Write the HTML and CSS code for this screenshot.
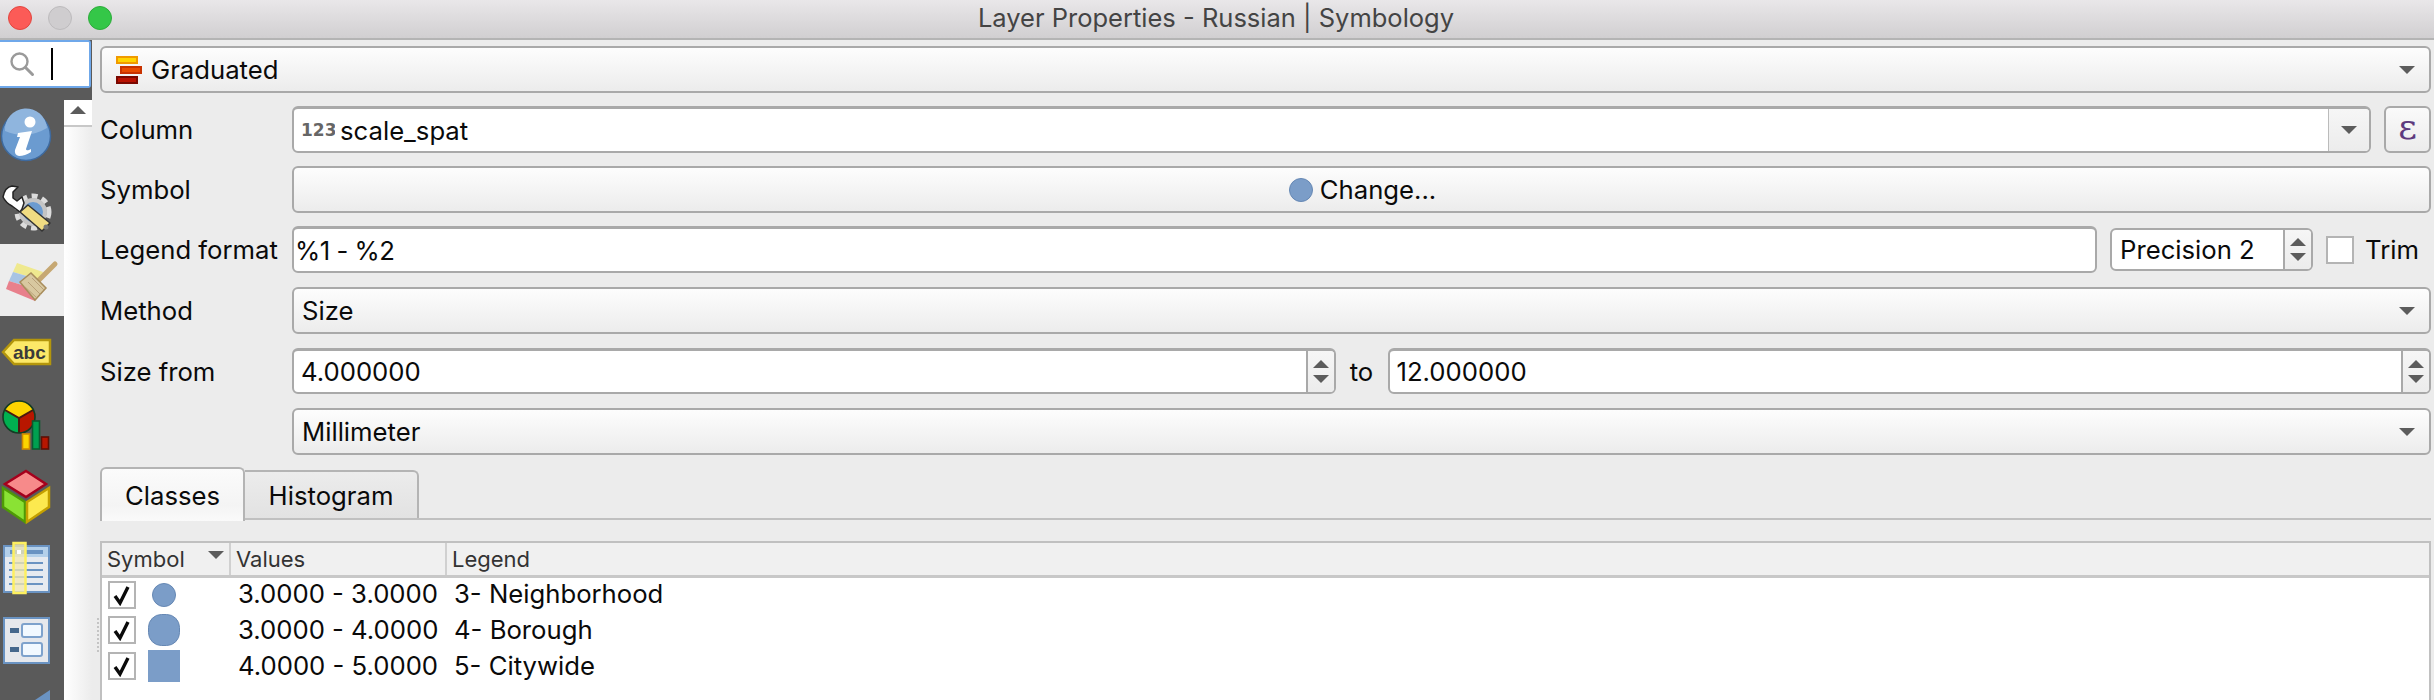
FILE: index.html
```html
<!DOCTYPE html>
<html lang="en">
<head>
  <meta charset="UTF-8" />
  <title>Layer Properties - Russian | Symbology</title>
  <link rel="stylesheet" href="styles.css">
</head>
<body>
  <div class="titlebar">
    <div class="lights">
      <span class="light red"></span>
      <span class="light grey"></span>
      <span class="light green"></span>
    </div>
    <div class="title">Layer Properties - Russian | Symbology</div>
  </div>

  <div class="window">
    <div class="sidebar">
      <div class="search">
        <svg class="search-icon" width="26" height="26" viewBox="0 0 26 26"><circle cx="10.5" cy="10.5" r="8" fill="none" stroke="#9a9a9a" stroke-width="2.4"/><path d="M16.5 16.5l7 7" stroke="#9a9a9a" stroke-width="3" stroke-linecap="round"/></svg>
        <span class="caret"></span>
      </div>
      <div class="sidebar-body">
        <div class="tabs-strip">
          <div class="page-item">
            <svg width="64" height="72" viewBox="0 0 64 72"><circle cx="26" cy="36" r="24.5" fill="#6b9bd0" stroke="#3e6a9f" stroke-width="1.5"/><path d="M5 31a21 21 0 0 1 42-3q-20 12-42 3z" fill="#8fb5de"/><circle cx="30" cy="22" r="5.5" fill="#fff"/><path d="M18 33l14-2-6 18q0 2 3 1l2-1 0 3q-6 4-12 4-5-1-4-6l5-13-3 0z" fill="#fff"/></svg>
          </div>
          <div class="page-item">
            <svg width="64" height="72" viewBox="0 0 64 72"><circle cx="33" cy="40" r="16" fill="none" stroke="#dcdcdc" stroke-width="5" stroke-dasharray="6 4.500"/><circle cx="33" cy="40" r="12" fill="#6b9bd0" stroke="#c4c4c4" stroke-width="4"/><path d="M3 25Q5 15 12 14L18 15 13 20 13 26 17 29 22 25 24 31 22 37 20 40 12 34Q6 31 3 25z" fill="#fff" stroke="#222" stroke-width="1.500" stroke-linejoin="round"/><polygon points="20,40 28,33 50,51 42,59" fill="#f0dc82" stroke="#333" stroke-width="1.500" stroke-linejoin="round"/><circle cx="46" cy="55" r="2.500" fill="#777"/></svg>
          </div>
          <div class="page-item active">
            <svg width="64" height="72" viewBox="0 0 64 72"><polygon points="17,19 43,28 40,36 13,28" fill="#efe98f"/><polygon points="13,28 40,36 38,46 9,37" fill="#a8c4e4"/><polygon points="9,37 38,46 35,57 6,45" fill="#e8808c"/><path d="M55 20L38 37" stroke="#c6a873" stroke-width="5" stroke-linecap="round"/><polygon points="20,38 31,29 46,44 35,56" fill="#d8c8a0" stroke="#a88d5c" stroke-width="1.5"/><path d="M24 42l13 12M28 38l13 13M32 34l12 12" stroke="#b8a078" stroke-width="1"/></svg>
          </div>
          <div class="page-item">
            <svg width="64" height="72" viewBox="0 0 64 72"><polygon points="3,36 14,24 50,24 50,48 14,48" fill="#fce868" stroke="#b4960c" stroke-width="2.5"/><text class="abc-text" x="13" y="43">abc</text></svg>
          </div>
          <div class="page-item">
            <svg width="64" height="72" viewBox="0 0 64 72"><path d="M19 30L5 22a15.5 15.5 0 0 1 28 0z" fill="#fcd500"/><path d="M19 30L33 22a15.5 15.5 0 0 1-14 23z" fill="#b81600"/><path d="M19 30L5 22a15.5 15.5 0 0 0 14 23z" fill="#00b050"/><path d="M5 22l14 8 14-8M19 30v15" fill="none" stroke="#4a1a10" stroke-width="2"/><circle cx="19" cy="29" r="16" fill="none" stroke="#143c24" stroke-width="1.6"/><rect x="22.500" y="46" width="7" height="15" fill="#fcd500" stroke="#d08a00" stroke-width="1.6"/><rect x="32.500" y="33" width="7" height="28" fill="#00a050" stroke="#0a5a30" stroke-width="1.6"/><rect x="41.500" y="49" width="7" height="12" fill="#b81600" stroke="#5c1006" stroke-width="1.6"/></svg>
          </div>
          <div class="page-item">
            <svg width="64" height="72" viewBox="0 0 64 72"><polygon points="26,11 46,24 26,37 5,24" fill="#f78a8a" stroke="#a5001c" stroke-width="2.5"/><polygon points="3,28 25,42 25,62 3,47" fill="#8ae234" stroke="#4e9a06" stroke-width="2.5"/><polygon points="27,42 49,28 49,47 27,62" fill="#fce94f" stroke="#c4a000" stroke-width="2.5"/></svg>
          </div>
          <div class="page-item">
            <svg width="64" height="72" viewBox="0 0 64 72"><rect x="4" y="14" width="45" height="46" fill="#e6eaf0" stroke="#6a93c2" stroke-width="2"/><rect x="5" y="15" width="43" height="10" fill="#b4d0ea"/><rect x="10" y="18" width="33" height="4" fill="#6a93c2"/><path d="M9 31h34M9 38h34M9 45h34M9 52h34" stroke="#6a93c2" stroke-width="2"/><rect x="13.500" y="11" width="12" height="50" fill="#f4e8b0" fill-opacity="0.75" stroke="#fdf060" stroke-width="2.500"/><rect x="17" y="18" width="4" height="4" fill="#fff"/></svg>
          </div>
          <div class="page-item">
            <svg width="64" height="72" viewBox="0 0 64 72"><rect x="4" y="14" width="45" height="45" fill="#e6e8ec" stroke="#6a93c2" stroke-width="2"/><rect x="10" y="24" width="9" height="5" fill="#46688c"/><rect x="10" y="43" width="9" height="5" fill="#46688c"/><rect x="22" y="20" width="20" height="13" rx="2" fill="#f2f9ff" stroke="#7ea2cc" stroke-width="2"/><rect x="22" y="39" width="20" height="13" rx="2" fill="#f2f9ff" stroke="#7ea2cc" stroke-width="2"/></svg>
          </div>
          <div class="page-item last">
            <svg width="64" height="24" viewBox="0 0 64 24"><polygon points="50,14 35,24 50,24" fill="#6a93c2"/></svg>
          </div>
        </div>
        <div class="scrollbar">
          <div class="scroll-up"><span class="arrow-up"></span></div>
          <div class="scroll-track"></div>
        </div>
      </div>
    </div>

    <div class="main">
      <div class="combo row-full">
        <svg class="renderer-icon" width="26" height="28" viewBox="0 0 26 28"><rect x="1" y="1" width="20" height="6" fill="#ffd400" stroke="#f09a00" stroke-width="2"/><rect x="5" y="11" width="20" height="6" fill="#e84a00" stroke="#c83200" stroke-width="2"/><rect x="1" y="21" width="20" height="6" fill="#b81000" stroke="#7a0800" stroke-width="2"/></svg>
        <span class="combo-text">Graduated</span>
        <span class="arrow-down combo-arrow"></span>
      </div>

      <div class="row">
        <label class="row-label">Column</label>
        <div class="field field-column">
          <span class="type-badge">123</span>
          <span class="field-text">scale_spat</span>
          <span class="field-drop"><span class="arrow-down"></span></span>
        </div>
        <div class="exp-btn">&#949;</div>
      </div>

      <div class="row">
        <label class="row-label">Symbol</label>
        <div class="button">
          <span class="change-dot"></span>
          <span>Change...</span>
        </div>
      </div>

      <div class="row">
        <label class="row-label">Legend format</label>
        <div class="field field-legend"><span class="field-text tight">%1 - %2</span></div>
        <div class="field field-precision">
          <span class="field-text">Precision 2</span>
          <span class="spin"><span class="arrow-up"></span><span class="arrow-down"></span></span>
        </div>
        <span class="check empty"></span>
        <span class="trim">Trim</span>
      </div>

      <div class="row row-low">
        <label class="row-label">Method</label>
        <div class="combo"><span class="combo-text plain">Size</span><span class="arrow-down combo-arrow"></span></div>
      </div>

      <div class="row row-low row-size">
        <label class="row-label">Size from</label>
        <div class="field field-size">
          <span class="field-text">4.000000</span>
          <span class="spin"><span class="arrow-up"></span><span class="arrow-down"></span></span>
        </div>
        <span class="to">to</span>
        <div class="field field-size">
          <span class="field-text">12.000000</span>
          <span class="spin"><span class="arrow-up"></span><span class="arrow-down"></span></span>
        </div>
      </div>

      <div class="row row-low">
        <span class="row-label"></span>
        <div class="combo"><span class="combo-text plain">Millimeter</span><span class="arrow-down combo-arrow"></span></div>
      </div>

      <div class="tabbar">
        <div class="tab active">Classes</div>
        <div class="tab">Histogram</div>
      </div>

      <div class="classes">
        <span class="splitter"></span>
        <table>
          <colgroup>
            <col class="col-symbol"><col class="col-values"><col>
          </colgroup>
          <thead>
            <tr>
              <th><span class="th-symbol">Symbol <span class="arrow-down small"></span></span></th>
              <th>Values</th>
              <th>Legend</th>
            </tr>
          </thead>
          <tbody>
            <tr>
              <td><div class="symbol-cell"><span class="check"><svg width="22" height="22" viewBox="0 0 22 22"><path d="M4 12l5 7 8-16" fill="none" stroke="#0a0a0a" stroke-width="3.400"/></svg></span><span class="sym sym-small"></span></div></td>
              <td>3.0000 - 3.0000</td>
              <td>3- Neighborhood</td>
            </tr>
            <tr>
              <td><div class="symbol-cell"><span class="check"><svg width="22" height="22" viewBox="0 0 22 22"><path d="M4 12l5 7 8-16" fill="none" stroke="#0a0a0a" stroke-width="3.400"/></svg></span><span class="sym sym-mid"></span></div></td>
              <td>3.0000 - 4.0000</td>
              <td>4- Borough</td>
            </tr>
            <tr>
              <td><div class="symbol-cell"><span class="check"><svg width="22" height="22" viewBox="0 0 22 22"><path d="M4 12l5 7 8-16" fill="none" stroke="#0a0a0a" stroke-width="3.400"/></svg></span><span class="sym sym-square"></span></div></td>
              <td>4.0000 - 5.0000</td>
              <td>5- Citywide</td>
            </tr>
          </tbody>
        </table>
      </div>
    </div>
  </div>
</body>
</html>
```

FILE: styles.css
```css
:root {
  --bg: #ececec;
  --line: #a9a9a9;
  --arrow: #5c5c5c;
  --symbol: #7b9dc8;
}

* {
  box-sizing: border-box;
}

body {
  margin: 0;
  height: 700px;
  overflow: hidden;
  display: flex;
  flex-direction: column;
  font-family: 'Inter', 'Liberation Sans', sans-serif;
  font-size: 25.7px;
  color: #0a0a0a;
  background: var(--bg);
}

/* title bar */
.titlebar {
  height: 40px;
  flex: none;
  display: flex;
  align-items: center;
  background: linear-gradient(#e9e7e9, #d1cfd1);
  border-bottom: 2px solid #b4b4b4;
}

.lights {
  display: flex;
  gap: 16px;
  padding-left: 8px;
  width: 0;
}

.light {
  flex: none;
  width: 24px;
  height: 24px;
  border-radius: 50%;
  margin-top: -3px;
}

.light.red { background: #fc5b57; border: 1px solid #e2463f; }
.light.grey { background: #cfcdcf; border: 1px solid #bdbbbd; }
.light.green { background: #34c748; border: 1px solid #2dac3b; }

.title {
  flex: 1;
  text-align: center;
  font-size: 25.5px;
  color: #444;
  margin-top: -3px;
  padding-right: 10px;
}

.window {
  height: 660px;
  flex: none;
  display: flex;
  overflow: hidden;
}

/* left page list */
.sidebar {
  width: 92px;
  flex: none;
  display: flex;
  flex-direction: column;
  background: #5a5a5a;
}

.search {
  height: 48px;
  margin-right: 1px;
  flex: none;
  display: flex;
  align-items: center;
  padding-left: 9px;
  gap: 16px;
  background: #fff;
  border: 2px solid #6fa8ea;
  border-left: 0;
  border-radius: 0 3px 3px 0;
}

.caret {
  width: 2px;
  height: 32px;
  background: #000;
}

.sidebar-body {
  height: 600px;
  display: flex;
  margin-top: 12px;
  overflow: hidden;
}

.tabs-strip {
  width: 64px;
  flex: none;
}

.page-item {
  height: 72px;
}

.page-item.last {
  height: 24px;
}

.page-item svg {
  display: block;
}

.page-item.active {
  background: #ededed;
}

.abc-text {
  font-family: 'Liberation Sans', sans-serif;
  font-weight: bold;
  font-size: 19px;
  fill: #3a3a3a;
}

.scrollbar {
  width: 28px;
  flex: none;
  display: flex;
  flex-direction: column;
  background: linear-gradient(90deg, #fff, #ececec);
}

.scroll-up {
  height: 27px;
  display: flex;
  align-items: center;
  justify-content: center;
  background: #fff;
  border-bottom: 2px solid #c8c8c8;
  padding-bottom: 5px;
}

/* arrows */
.arrow-up, .arrow-down {
  display: block;
  width: 0;
  height: 0;
  border-left: 8px solid transparent;
  border-right: 8px solid transparent;
}

.arrow-up {
  border-bottom: 8px solid var(--arrow);
}

.arrow-down {
  border-top: 8px solid var(--arrow);
}

/* form */
.main {
  flex: 1;
  min-width: 0;
  padding: 6px 3px 0 8px;
  display: flex;
  flex-direction: column;
}

.row {
  display: flex;
  align-items: center;
  height: 47px;
  flex: none;
  margin-top: 13px;
}

.row-low {
  margin-top: 14px;
}

.row-label {
  width: 192px;
  flex: none;
  white-space: nowrap;
}

.combo, .button {
  flex: 1;
  height: 47px;
  display: flex;
  align-items: center;
  border: 2px solid var(--line);
  border-radius: 6px;
  background: linear-gradient(#fdfdfd, #ececec);
}

.row-full {
  flex: none;
  padding-left: 14px;
}

.renderer-icon {
  margin-right: 9px;
}

.combo-text.plain {
  padding-left: 8px;
}

.combo-arrow {
  margin-left: auto;
  margin-right: 14px;
}

.button {
  justify-content: center;
  padding-left: 2px;
}

.change-dot {
  width: 24px;
  height: 24px;
  border-radius: 50%;
  margin-right: 7px;
  background: var(--symbol);
  border: 1px solid #6688b4;
}

.field {
  height: 47px;
  display: flex;
  align-items: center;
  background: #fff;
  border: 2px solid var(--line);
  border-top-width: 3px;
  border-radius: 6px;
  overflow: hidden;
}

.field-text {
  padding-left: 7px;
}

.field-text.tight {
  padding-left: 1px;
  letter-spacing: -0.5px;
}

.field-column {
  flex: 1;
}

.type-badge {
  width: 41px;
  padding-left: 7px;
  flex: none;
  overflow: hidden;
  white-space: nowrap;
  font-family: 'DejaVu Sans', sans-serif;
  font-size: 17px;
  font-weight: bold;
  color: #666;
}

.type-badge + .field-text {
  padding-left: 5px;
}

.field-drop {
  margin-left: auto;
  width: 41px;
  height: 100%;
  display: flex;
  align-items: center;
  justify-content: center;
  background: linear-gradient(#f6f6f6, #ececec);
  border-left: 1px solid #bbb;
}

.exp-btn {
  width: 47px;
  height: 47px;
  margin-left: 13px;
  flex: none;
  display: flex;
  align-items: center;
  justify-content: center;
  border: 2px solid var(--line);
  border-radius: 6px;
  background: linear-gradient(#fafafa, #ececec);
  font-family: 'DejaVu Serif', serif;
  font-size: 36px;
  color: #5d3a7e;
  padding-bottom: 6px;
}

.field-legend {
  width: 1805px;
  flex: none;
}

.field-precision {
  width: 203px;
  height: 43px;
  flex: none;
  margin-left: 13px;
  border-top-width: 2px;
}

.field-precision .field-text {
  padding-left: 8px;
}

.spin {
  margin-left: auto;
  width: 28px;
  height: 100%;
  flex: none;
  display: flex;
  flex-direction: column;
  align-items: center;
  justify-content: center;
  gap: 7px;
  background: linear-gradient(#f6f6f6, #ececec);
  border-left: 2px solid var(--line);
}

.check {
  width: 28px;
  height: 28px;
  flex: none;
  display: flex;
  align-items: center;
  justify-content: center;
  background: #fff;
  border: 2px solid #b4b4b4;
}

.check.empty {
  margin-left: 13px;
}

.trim {
  margin-left: 11px;
}

.row-size {
  height: 46px;
}

.field-size {
  flex: 1;
  height: 46px;
}

.to {
  width: 52px;
  flex: none;
  text-align: center;
}

/* tabs */
.tabbar {
  flex: none;
  display: flex;
  align-items: flex-end;
  height: 53px;
  margin-top: 12px;
  border-bottom: 2px solid #c0c0c0;
}

.tab {
  width: 174px;
  height: 48px;
  display: flex;
  align-items: center;
  justify-content: center;
  background: linear-gradient(#ececec, #e2e2e2);
  border: 2px solid #b4b4b4;
  border-left: 0;
  border-bottom: 0;
  border-radius: 0 6px 0 0;
}

.tab.active {
  width: 145px;
  height: 54px;
  margin-bottom: -3px;
  background: linear-gradient(#fbfbfb, #f4f4f4 70%, #fafafa);
  border-left: 2px solid #b4b4b4;
  border-radius: 6px 6px 0 0;
}

/* class table */
.classes {
  flex: 1;
  position: relative;
  margin-top: 21px;
  background: #fff;
  border: 2px solid #c0c0c0;
  border-bottom: 0;
  min-height: 0;
}

.splitter {
  position: absolute;
  left: -5px;
  top: 75px;
  height: 34px;
  border-left: 2px dotted #c4c4c4;
}

table {
  width: 100%;
  border-collapse: collapse;
  table-layout: fixed;
}

.col-symbol {
  width: 128px;
}

.col-values {
  width: 216px;
}

th {
  height: 33px;
  padding: 0 0 0 5px;
  font-size: 22px;
  font-weight: normal;
  text-align: left;
  color: #333;
  background: #f0f0f0;
  border-bottom: 3px solid #c8c8c8;
  border-right: 2px solid #d0d0d0;
}

th:last-child {
  border-right: 0;
}

.th-symbol {
  display: flex;
  align-items: center;
  justify-content: space-between;
  padding-right: 5px;
}

.arrow-down.small {
  margin-bottom: 8px;
}

td {
  height: 36px;
  padding: 0 0 2px 8px;
  white-space: nowrap;
}

td:first-child {
  padding: 0 0 0 6px;
}

.symbol-cell {
  display: flex;
  align-items: center;
}

.sym {
  background: var(--symbol);
  flex: none;
}

.sym-small {
  width: 24px;
  height: 24px;
  margin-left: 16px;
  border-radius: 50%;
  border: 1px solid #6688b4;
}

.sym-mid {
  width: 32px;
  height: 32px;
  margin-left: 12px;
  border-radius: 42%;
  border: 1px solid #6688b4;
}

.sym-square {
  width: 32px;
  height: 32px;
  margin-left: 12px;
}
```
